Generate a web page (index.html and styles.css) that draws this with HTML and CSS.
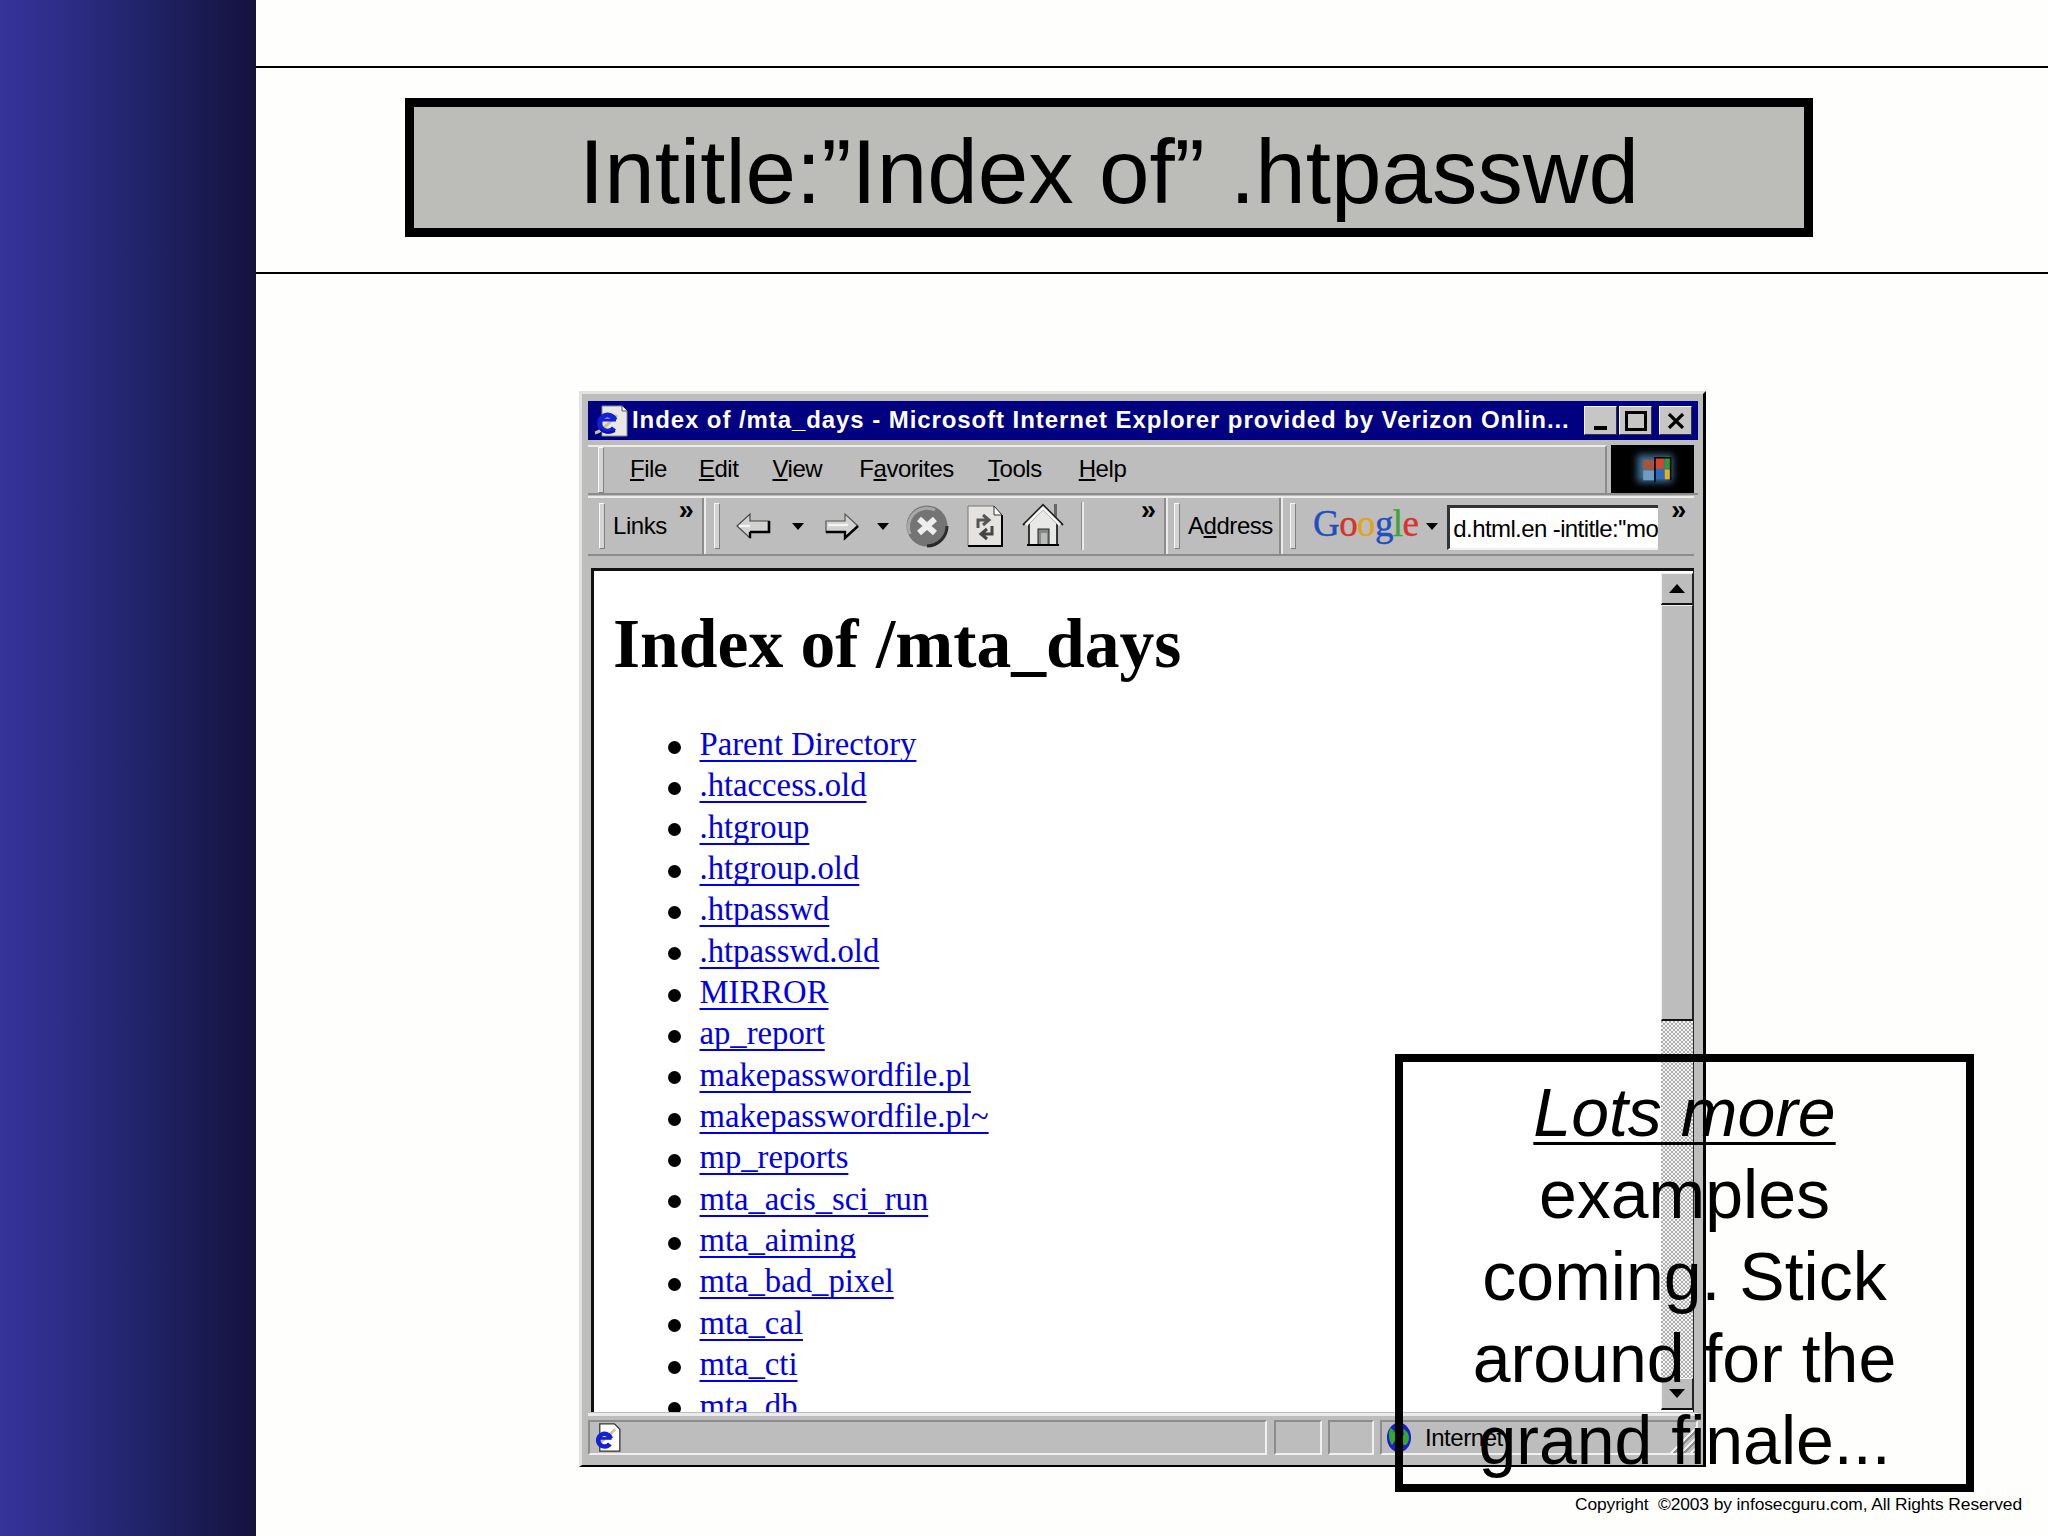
FILE: index.html
```html
<!DOCTYPE html>
<html lang="en">
<head>
<meta charset="utf-8">
<title>Intitle:"Index of" .htpasswd</title>
<link rel="stylesheet" href="styles.css">
</head>
<body>
<div class="slide">
  <aside class="sidebar"></aside>
  <main class="main">
    <header class="title-band">
      <h1 class="slide-title">Intitle:”Index of” .htpasswd</h1>
    </header>
    <section class="browser">
      <div class="titlebar">
        <svg class="tb-icon" viewBox="0 0 36 32"><path d="M10 1h20l5 5v25H10z" fill="#e8e8e4" stroke="#8a8a8a"/><path d="M30 1v5h5" fill="#fff" stroke="#555"/><path d="M3 28c6-1 12-8 22-18" stroke="#c9c38a" stroke-width="3" fill="none"/><path d="M23 15a8 8 0 1 0-1 8" fill="none" stroke="#1420d8" stroke-width="5"/><path d="M9 15h15" stroke="#1420d8" stroke-width="3"/><path d="M8 24c3 4 9 5 15 2" stroke="#0a10a0" stroke-width="2" fill="none"/></svg>
        <span class="tb-text">Index of /mta_days - Microsoft Internet Explorer provided by Verizon Onlin...</span>
        <div class="win-btns">
          <span class="win-btn"><i class="glyph-min"></i></span>
          <span class="win-btn"><i class="glyph-max"></i></span>
          <span class="win-btn win-close"><svg viewBox="0 0 18 16" class="glyph-x"><path d="M2 1l14 14M16 1L2 15" stroke="#000" stroke-width="3.2"/></svg></span>
        </div>
      </div>

      <div class="menu-row">
        <nav class="menu">
          <i class="grip"></i>
          <span class="m-file"><u>F</u>ile</span>
          <span class="m-edit"><u>E</u>dit</span>
          <span class="m-view"><u>V</u>iew</span>
          <span class="m-fav">F<u>a</u>vorites</span>
          <span class="m-tools"><u>T</u>ools</span>
          <span class="m-help"><u>H</u>elp</span>
        </nav>
        <div class="flag">
          <svg viewBox="0 0 84 49" class="flag-svg">
            <g class="flag-halo"><rect x="26" y="10" width="36" height="28" fill="#3f6f95"/></g>
            <rect x="32" y="15" width="11" height="10" fill="#a5553f"/><rect x="44" y="13" width="9" height="11" fill="#d8452a"/><rect x="54" y="12" width="6" height="12" fill="#2f9a3a"/>
            <rect x="32" y="26" width="11" height="10" fill="#6d9ec2"/><rect x="44" y="25" width="9" height="10" fill="#2a6ac0"/><rect x="54" y="25" width="6" height="10" fill="#e2b21e"/>
            <path d="M44 38V13h16v23" fill="none" stroke="#000" stroke-width="1.6"/>
          </svg>
        </div>
      </div>

      <div class="tool-row">
        <div class="tool-links">
          <i class="grip"></i>
          <span class="t-links">Links</span>
          <span class="chev">»</span>
        </div>
        <div class="tool-nav">
          <i class="grip"></i>
          <svg class="ic ic-back" viewBox="0 0 36 30"><path d="M2 15L15 3v7h19v11H15v6z" fill="#d2d2d0" stroke="#444" stroke-width="1.2"/><path d="M15 21h19V10" fill="none" stroke="#000" stroke-width="2.6"/><path d="M15 27v-6" stroke="#000" stroke-width="2.4"/><path d="M4 15h11" stroke="#f4f4f4" stroke-width="2.4"/></svg>
          <i class="drop d-back"></i>
          <svg class="ic ic-fwd" viewBox="0 0 36 30"><path d="M34 15L21 3v7H2v11h19v6z" fill="#d2d2d0" stroke="#555" stroke-width="1.2"/><path d="M2 21h19v6l13-12" fill="none" stroke="#000" stroke-width="2.4"/><path d="M4 14h20" stroke="#f4f4f4" stroke-width="2.4"/></svg>
          <i class="drop d-fwd"></i>
          <svg class="ic ic-stop" viewBox="0 0 44 44"><circle cx="22" cy="22" r="20.5" fill="#747474"/><path d="M5 30a18.5 18.5 0 0 1 25-24" fill="none" stroke="#a8a8a8" stroke-width="3"/><path d="M22 42a20 20 0 0 0 20-20" fill="none" stroke="#2a2a2a" stroke-width="3"/><path d="M14 15l16 14M30 15L14 29" stroke="#eeeeee" stroke-width="6"/></svg>
          <svg class="ic ic-refresh" viewBox="0 0 38 44"><path d="M2 2h26l8 9v31H2z" fill="#e4e3df" stroke="#777"/><path d="M36 11v31H2" fill="none" stroke="#000" stroke-width="2"/><path d="M28 2v9h8z" fill="#fff" stroke="#333"/><path d="M12 24v-8h9M17 11l6 5-6 5" fill="none" stroke="#555" stroke-width="3"/><path d="M26 22v8h-9M21 25l-6 5 6 5" fill="none" stroke="#444" stroke-width="3"/></svg>
          <svg class="ic ic-home" viewBox="0 0 44 46"><path d="M33 3h3v14h-3z" fill="#666"/><path d="M8 44V22L22 8l14 14v22z" fill="#e8e8e6" stroke="#000" stroke-width="1.5"/><path d="M2 24L22 4l20 20" fill="none" stroke="#222" stroke-width="2"/><path d="M5 24L22 7l17 17" fill="none" stroke="#f5f5f5" stroke-width="3"/><rect x="17" y="28" width="11" height="16" fill="#888" stroke="#222"/><rect x="20" y="32" width="6" height="12" fill="#b8bcb8"/><path d="M6 44h32" stroke="#000" stroke-width="2"/></svg>
          <i class="thin-sep"></i>
          <span class="chev chev-nav">»</span>
        </div>
        <div class="tool-addr">
          <i class="grip"></i>
          <span class="t-addr">A<u>d</u>dress</span>
        </div>
        <div class="tool-google">
          <i class="grip"></i>
          <span class="google"><b class="g-b">G</b><b class="g-r">o</b><b class="g-y">o</b><b class="g-b">g</b><b class="g-g">l</b><b class="g-r">e</b></span>
          <i class="drop d-google"></i>
          <span class="search">d.html.en -intitle:''mo</span>
          <span class="chev chev-end">»</span>
        </div>
      </div>

      <div class="frame">
        <div class="page">
          <h2 class="page-title">Index of /mta_days</h2>
          <ul class="dir">
            <li><a>Parent Directory</a></li>
            <li><a>.htaccess.old</a></li>
            <li><a>.htgroup</a></li>
            <li><a>.htgroup.old</a></li>
            <li><a>.htpasswd</a></li>
            <li><a>.htpasswd.old</a></li>
            <li><a>MIRROR</a></li>
            <li><a>ap_report</a></li>
            <li><a>makepasswordfile.pl</a></li>
            <li><a>makepasswordfile.pl~</a></li>
            <li><a>mp_reports</a></li>
            <li><a>mta_acis_sci_run</a></li>
            <li><a>mta_aiming</a></li>
            <li><a>mta_bad_pixel</a></li>
            <li><a>mta_cal</a></li>
            <li><a>mta_cti</a></li>
            <li><a>mta_db</a></li>
          </ul>
        </div>
        <div class="scroll">
          <span class="sb-btn"><i class="arrow-up"></i></span>
          <span class="sb-thumb"></span>
          <span class="sb-track"></span>
          <span class="sb-btn"><i class="arrow-down"></i></span>
        </div>
      </div>

      <footer class="status">
        <div class="st-main">
          <svg class="st-ie" viewBox="0 0 32 34"><path d="M7 2h16l6 6v24H7z" fill="#fff" stroke="#333" stroke-width="1.4"/><path d="M1 27C7 25 14 17 24 8" stroke="#c9c38a" stroke-width="3" fill="none"/><path d="M19 18a7 7 0 1 0-1 6" fill="none" stroke="#1420d8" stroke-width="5"/><path d="M6 18h14" stroke="#1420d8" stroke-width="3"/></svg>
        </div>
        <div class="st-cell st-a"></div>
        <div class="st-cell st-b"></div>
        <div class="st-zone">
          <svg class="st-globe" viewBox="0 0 30 36"><ellipse cx="15" cy="18" rx="14" ry="17" fill="#1c1ccc"/><path d="M5 7c5 3 8 8 5 15l-3 5c-4-5-5-14-2-20zM20 8c5 2 8 8 6 14s-5 6-7 3 0-6 1-9 0-5 0-8z" fill="#2fa82f"/></svg>
          <span class="st-text">Internet</span>
          <i class="st-grip"></i>
        </div>
      </footer>
    </section>
    <p class="copyright">Copyright &nbsp;©2003 by infosecguru.com, All Rights Reserved</p>
  </main>

  <aside class="callout">
    <em>Lots more</em><br>examples<br>coming. Stick<br>around for the<br>grand finale...
  </aside>
</div>
</body>
</html>
```

FILE: styles.css
```css
* { box-sizing: border-box; }
html, body { margin: 0; padding: 0; }
body { background: #fff; font-family: "Liberation Sans", Arial, sans-serif; color: #000; }

.slide { position: relative; display: flex; width: 2048px; height: 1536px; overflow: hidden; background: #fefffd; }
.sidebar { flex: 0 0 256px; background: linear-gradient(90deg, #36339a 0%, #2c2b82 30%, #1f2264 60%, #15123f 100%); }
.main { flex: 1; display: flex; flex-direction: column; min-width: 0; }

.title-band { margin-top: 66px; height: 208px; border-top: 2px solid #000; border-bottom: 2px solid #000; padding: 30px 0 0 149px; }
.slide-title { margin: 0; width: 1408px; height: 139px; border: 9px solid #000; padding-top: 8px; background: #bcbdb9; font-weight: 400; font-size: 90.8px; line-height: 113px; text-align: center; }

/* Browser window */
.browser { margin: 117px 0 0 323px; width: 1127px; height: 1076px; display: flex; flex-direction: column; background: #bdbdbd; border-style: solid; border-width: 3px 3px 2px 3px; border-color: #e2e3e0 #000 #000 #e2e3e0; padding: 7px 5px 8px 6px; font-family: "Liberation Sans", Arial, sans-serif; }

.titlebar { flex: 0 0 39px; display: flex; align-items: center; background: #000080; color: #fff; padding-right: 6px; }
.tb-icon { width: 36px; height: 32px; margin-left: 4px; flex: none; }
.tb-text { margin: 0 0 2px 4px; font-size: 24px; font-weight: 700; letter-spacing: 0.92px; white-space: nowrap; }
.win-btns { margin-left: auto; display: flex; gap: 2px; }
.win-btn { width: 33px; height: 29px; background: #c6c6c4; border: 1px solid; border-color: #f4f4f4 #333 #333 #f4f4f4; display: flex; align-items: center; justify-content: center; position: relative; }
.win-close { margin-left: 5px; }
.glyph-min { width: 13px; height: 4px; background: #000; align-self: flex-end; margin-bottom: 4px; }
.glyph-max { width: 22px; height: 20px; border: 3px solid #000; border-top-width: 3px; }
.glyph-x { width: 18px; height: 16px; }

.menu-row { flex: 0 0 55px; display: flex; padding: 5px 4px 0 0; border-bottom: 2px solid #8c8c8c; }
.menu { flex: 0 0 1019px; display: flex; align-items: center; border-top: 2px solid #ecebe9; border-right: 2px solid #8c8c8c; font-size: 24px; letter-spacing: -0.45px; padding-left: 10px; }
.menu span { white-space: nowrap; margin-bottom: 3px; }
.m-file { margin-left: 26px; }
.m-edit { margin-left: 32px; }
.m-view { margin-left: 34px; }
.m-fav { margin-left: 37px; }
.m-tools { margin-left: 34px; }
.m-help { margin-left: 37px; }
.flag { flex: 0 0 83px; margin-left: 4px; background: #000; overflow: hidden; }
.flag-svg { display: block; width: 84px; height: 48px; }
.flag-halo { filter: blur(4px); }

.grip { display: block; flex: none; width: 6px; height: 46px; background: #d4d4d4; border: 1px solid; border-color: #f8f8f8 #808080 #808080 #f8f8f8; }

.tool-row { flex: 0 0 60px; margin: 1px 4px 0 0; display: flex; align-items: center; font-size: 24px; letter-spacing: -0.45px; border-top: 2px solid #ecebe9; border-bottom: 2px solid #8c8c8c; }
.tool-links, .tool-nav, .tool-addr, .tool-google { height: 100%; display: flex; align-items: center; position: relative; flex: none; }
.tool-links { width: 116px; padding-left: 11px; border-right: 2px solid #8c8c8c; }
.t-links { margin-left: 8px; }
.chev { font-size: 27px; font-weight: 700; line-height: 1; align-self: flex-start; margin-top: -1px; letter-spacing: 0; }
.tool-links .chev { margin-left: 12px; }
.tool-nav { width: 462px; padding-left: 8px; border-right: 2px solid #8c8c8c; border-left: 2px solid #ecebe9; }
.ic { display: block; flex: none; }
.ic-back { width: 36px; height: 30px; margin-left: 15px; }
.d-back { margin-left: 21px; }
.ic-fwd { width: 36px; height: 30px; margin-left: 20px; }
.d-fwd { margin-left: 17px; }
.ic-stop { width: 44px; height: 44px; margin-left: 16px; }
.ic-refresh { width: 38px; height: 44px; margin-left: 17px; }
.ic-home { width: 44px; height: 46px; margin-left: 17px; margin-top: -4px; }
.thin-sep { display: block; width: 3px; height: 48px; margin-left: 16px; background: #ecebe9; border-left: 1px solid #8c8c8c; }
.chev-nav { margin-left: 57px; }
.drop { display: block; flex: none; width: 0; height: 0; border: 6px solid transparent; border-top: 7px solid #000; border-bottom: 0; }

.tool-addr { width: 115px; padding-left: 6px; border-left: 2px solid #ecebe9; border-right: 2px solid #8c8c8c; }
.t-addr { margin-left: 8px; white-space: nowrap; }
.tool-google { flex: 1; padding-left: 7px; border-left: 2px solid #ecebe9; }
.google { margin-left: 17px; font-family: "Liberation Serif", serif; font-size: 37px; letter-spacing: -0.6px; line-height: 1; margin-top: -6px; -webkit-text-stroke: 0.4px currentColor; white-space: nowrap; }
.google b { font-weight: 400; }
.g-b { color: #1f4fc0; }
.g-r { color: #d8322a; }
.g-y { color: #e0a520; }
.g-g { color: #3fa33a; }
.d-google { margin-left: 8px; }
.search { display: block; flex: none; margin: 3px 0 0 9px; width: 211px; height: 45px; overflow: hidden; background: #fff; border-style: solid; border-width: 3px 0 2px 3px; border-color: #333 #fff #eee #333; font-size: 24px; letter-spacing: -0.6px; line-height: 42px; padding-left: 3px; white-space: nowrap; }
.chev-end { margin-left: 13px; }

/* Page area */
.frame { flex: 0 0 844px; margin: 12px 4px 0 3px; display: flex; border-top: 3px solid #111; border-left: 3px solid #111; border-right: 1px solid #222; overflow: hidden; background: #fff; }
.page { flex: 1; min-width: 0; overflow: hidden; background: #fff; padding: 33px 0 0 19px; }
.page-title { margin: 0; font-family: "Liberation Serif", "Times New Roman", serif; font-weight: 700; font-size: 69.6px; line-height: 80px; white-space: nowrap; }
.dir { list-style: none; margin: 40px 0 0; padding: 0 0 0 54.5px; font-family: "Liberation Serif", "Times New Roman", serif; font-size: 32.7px; line-height: 41.35px; }
.dir li { display: flex; align-items: center; gap: 19px; height: 41.35px; }
.dir li::before { content: ""; display: block; flex: none; width: 13px; height: 13px; border-radius: 50%; background: #000; margin-top: 5px; }
.dir a { color: #0000e6; text-decoration: underline; text-decoration-thickness: 2px; text-underline-offset: 5px; text-decoration-skip-ink: none; white-space: nowrap; }

.scroll { flex: 0 0 32px; display: flex; flex-direction: column; margin-top: 2px; height: 837px; }
.sb-btn { flex: 0 0 32px; background: #bdbdbd; border: 1px solid; border-color: #f0f0f0 #222 #111 #f0f0f0; border-bottom-width: 2px; display: flex; align-items: center; justify-content: center; }
.sb-thumb { flex: 0 0 416px; background: #bdbdbd; border: 1px solid; border-color: #f0f0f0 #222 #111 #f0f0f0; border-bottom-width: 2px; }
.sb-track { flex: 1; background-color: #d4d4d4; background-image: repeating-conic-gradient(#f4f4f4 0 25%, #adadad 0 50%); background-size: 4px 4px; }
.arrow-up, .arrow-down { display: block; width: 0; height: 0; border: 8px solid transparent; }
.arrow-up { border-bottom: 9px solid #000; border-top: 0; }
.arrow-down { border-top: 9px solid #000; border-bottom: 0; }

/* Status bar */
.status { flex: 0 0 44px; margin-top: 1px; padding-top: 4px; border-top: 3px solid #ecebe9; display: flex; gap: 6px; }
.st-main, .st-cell, .st-zone { height: 35px; border: 2px solid; border-color: #8c8c8c #f0f0f0 #f0f0f0 #8c8c8c; }
.st-main { flex: 0 0 679px; position: relative; display: flex; align-items: center; }
.st-ie { width: 32px; height: 31px; margin-left: 2px; }
.st-a { flex: 0 0 48px; margin-left: 1px; }
.st-b { flex: 0 0 46px; }
.st-zone { flex: 1; display: flex; align-items: center; position: relative; }
.st-globe { width: 28px; height: 31px; margin-left: 3px; flex: none; }
.st-text { margin-left: 12px; font-size: 24px; letter-spacing: -0.45px; }
.st-grip { position: absolute; right: 0; bottom: 0; width: 28px; height: 28px; background: repeating-linear-gradient(135deg, #f0f0f0 0 2px, #8c8c8c 2px 4px, #bdbdbd 4px 7px); clip-path: polygon(100% 0, 100% 100%, 0 100%); }

.copyright { margin: 26px 0 0; padding-right: 26px; text-align: right; font-size: 17.4px; line-height: 22px; letter-spacing: -0.1px; white-space: nowrap; }

/* Callout over the browser */
.callout { position: absolute; left: 1395px; top: 1054px; width: 579px; height: 438px; border: 8px solid #000; padding-top: 9px; text-align: center; font-size: 68px; line-height: 82px; white-space: nowrap; }
.callout em { text-decoration: underline; text-decoration-thickness: 3px; text-underline-offset: 6px; text-decoration-skip-ink: none; }
```
